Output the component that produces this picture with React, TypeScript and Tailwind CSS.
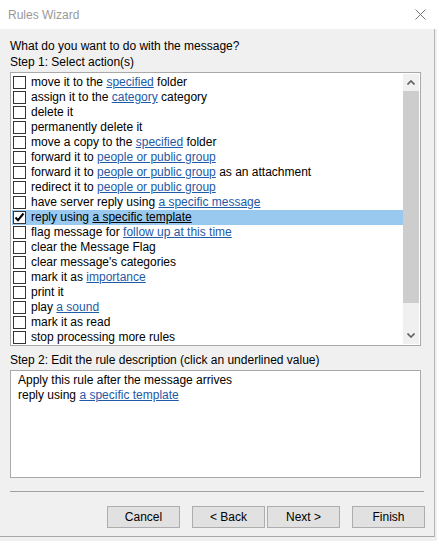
import React from "react";

type Part = string | { link: string };
const rows: Part[][] = [
  ["move it to the ", { link: "specified" }, " folder"],
  ["assign it to the ", { link: "category" }, " category"],
  ["delete it"],
  ["permanently delete it"],
  ["move a copy to the ", { link: "specified" }, " folder"],
  ["forward it to ", { link: "people or public group" }],
  ["forward it to ", { link: "people or public group" }, " as an attachment"],
  ["redirect it to ", { link: "people or public group" }],
  ["have server reply using ", { link: "a specific message" }],
  ["reply using ", { link: "a specific template" }],
  ["flag message for ", { link: "follow up at this time" }],
  ["clear the Message Flag"],
  ["clear message's categories"],
  ["mark it as ", { link: "importance" }],
  ["print it"],
  ["play ", { link: "a sound" }],
  ["mark it as read"],
  ["stop processing more rules"],
];

function Checkbox({ checked }: { checked: boolean }) {
  return (
    <div className="w-[13px] h-[13px] border border-[#333333] bg-white flex items-center justify-center shrink-0">
      {checked && (
        <svg width="11" height="11" viewBox="0 0 11 11">
          <path d="M1.5 5.5 L4 8.2 L9.5 1.5" stroke="#000" strokeWidth="2" fill="none" />
        </svg>
      )}
    </div>
  );
}

function Btn({ children }: { children: React.ReactNode }) {
  return (
    <div className="w-[73px] h-[22px] shrink-0 bg-[#e1e1e1] border border-[#adadad] flex items-center justify-center text-[12px] text-black">
      {children}
    </div>
  );
}

export default function App() {
  return (
    <div
      className="w-[437px] h-[541px] bg-[#f0f0f0] relative overflow-hidden text-black"
      style={{ fontFamily: '"Liberation Sans", Arial, sans-serif' }}
    >
      <div className="h-[29px] bg-white flex items-center justify-between pl-[8px] pr-[11px]">
        <span className="text-[12px] text-[#999999]">Rules Wizard</span>
        <svg width="11" height="11" viewBox="0 0 11 11">
          <path d="M0.5 0.5 L10.5 10.5 M10.5 0.5 L0.5 10.5" stroke="#777" strokeWidth="1" fill="none" />
        </svg>
      </div>
      <div className="h-[508px] border-r border-[#b5b5b5] w-[435px] border-b border-b-[#a8a8a8]">
        <div className="pl-[10px] pr-[4px] pt-[9px] text-[12px] leading-[16px]">
          <div>What do you want to do with the message?</div>
          <div>Step 1: Select action(s)</div>
          <div className="mt-[2px] w-[411px] h-[274px] border border-[#a9a9a9] bg-white flex">
            <div className="flex-1 pl-[1px] pt-[2px] overflow-hidden">
              {rows.map((parts, i) => {
                const sel = i === 9;
                return (
                  <div
                    key={i}
                    className={`h-[15px] flex items-center pl-[1px] text-[12px] leading-[15px] whitespace-pre ${sel ? "bg-[#99c9ef]" : ""}`}
                  >
                    <Checkbox checked={sel} />
                    <span className="ml-[5px]">
                      {parts.map((p, j) =>
                        typeof p === "string" ? (
                          <span key={j}>{p}</span>
                        ) : (
                          <span key={j} className={`underline ${sel ? "text-black" : "text-[#1f5aa6]"}`}>
                            {p.link}
                          </span>
                        )
                      )}
                    </span>
                  </div>
                );
              })}
            </div>
            <div className="w-[16px] bg-[#f0f0f0] flex flex-col mt-[1px] mb-[1px] mr-[1px]">
              <div className="h-[17px] flex items-center justify-center">
                <svg width="8" height="5" viewBox="0 0 8 5">
                  <path d="M0.5 4.5 L4 1 L7.5 4.5" stroke="#606060" strokeWidth="1.6" fill="none" />
                </svg>
              </div>
              <div className="h-[212px] bg-[#cdcdcd]" />
              <div className="flex-1" />
              <div className="h-[17px] flex items-center justify-center">
                <svg width="8" height="5" viewBox="0 0 8 5">
                  <path d="M0.5 0.5 L4 4 L7.5 0.5" stroke="#606060" strokeWidth="1.6" fill="none" />
                </svg>
              </div>
            </div>
          </div>
          <div className="mt-[6px]">Step 2: Edit the rule description (click an underlined value)</div>
          <div className="mt-[2px] w-[411px] h-[108px] border border-[#a9a9a9] bg-white pl-[7px] pt-[2px] leading-[15px]">
            <div>Apply this rule after the message arrives</div>
            <div>
              reply using <span className="underline text-[#1f5aa6]">a specific template</span>
            </div>
          </div>
          <div className="mt-[13px] w-[414px] h-[1px] bg-[#a0a0a0]" />
          <div className="mt-[14px] flex pl-[97px]">
            <Btn>Cancel</Btn>
            <div className="w-[12px] shrink-0" />
            <Btn>&lt; Back</Btn>
            <div className="w-[2px] shrink-0" />
            <Btn>Next &gt;</Btn>
            <div className="w-[12px] shrink-0" />
            <Btn>Finish</Btn>
          </div>
        </div>
      </div>
    </div>
  );
}
